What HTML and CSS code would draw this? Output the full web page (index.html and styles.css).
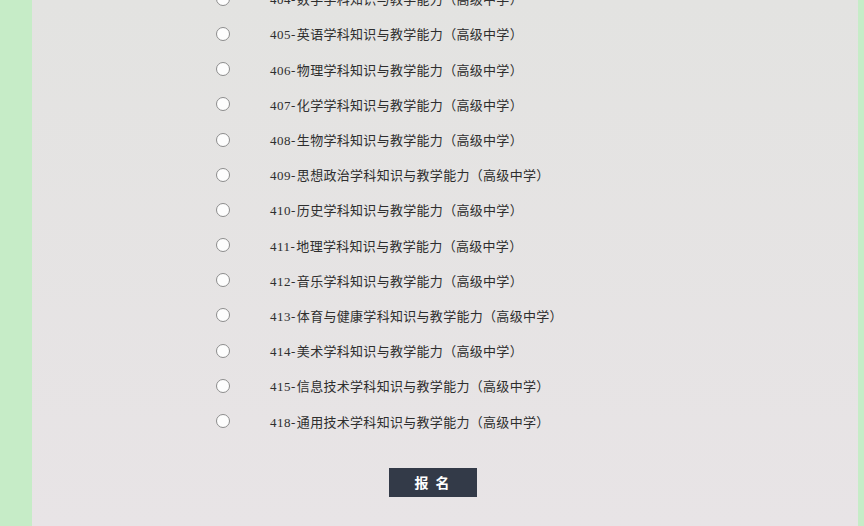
FILE: index.html
```html
<!DOCTYPE html>
<html lang="zh-CN">
<head>
    <meta charset="UTF-8">
    <meta name="viewport" content="width=device-width, initial-scale=1.0">
    <title>报名 - 科目选择</title>
    <link rel="stylesheet" href="styles.css">
</head>
<body>
    <!-- 科目列表 -->
    <div class="panel">
        <ul class="opciones">
            <li><span class="radio"></span><span class="nombre"><span class="codigo">404-</span>数学学科知识与教学能力（高级中学）</span></li>
            <li><span class="radio"></span><span class="nombre"><span class="codigo">405-</span>英语学科知识与教学能力（高级中学）</span></li>
            <li><span class="radio"></span><span class="nombre"><span class="codigo">406-</span>物理学科知识与教学能力（高级中学）</span></li>
            <li><span class="radio"></span><span class="nombre"><span class="codigo">407-</span>化学学科知识与教学能力（高级中学）</span></li>
            <li><span class="radio"></span><span class="nombre"><span class="codigo">408-</span>生物学科知识与教学能力（高级中学）</span></li>
            <li><span class="radio"></span><span class="nombre"><span class="codigo">409-</span>思想政治学科知识与教学能力（高级中学）</span></li>
            <li><span class="radio"></span><span class="nombre"><span class="codigo">410-</span>历史学科知识与教学能力（高级中学）</span></li>
            <li><span class="radio"></span><span class="nombre"><span class="codigo">411-</span>地理学科知识与教学能力（高级中学）</span></li>
            <li><span class="radio"></span><span class="nombre"><span class="codigo">412-</span>音乐学科知识与教学能力（高级中学）</span></li>
            <li><span class="radio"></span><span class="nombre"><span class="codigo">413-</span>体育与健康学科知识与教学能力（高级中学）</span></li>
            <li><span class="radio"></span><span class="nombre"><span class="codigo">414-</span>美术学科知识与教学能力（高级中学）</span></li>
            <li><span class="radio"></span><span class="nombre"><span class="codigo">415-</span>信息技术学科知识与教学能力（高级中学）</span></li>
            <li><span class="radio"></span><span class="nombre"><span class="codigo">418-</span>通用技术学科知识与教学能力（高级中学）</span></li>
        </ul>

        <!-- 报名按钮 -->
        <div class="acciones">
            <button class="btn-registro">报 名</button>
        </div>
    </div>
</body>
</html>
```

FILE: styles.css
```css
/* 全局 */
body {
    margin: 0;
    padding: 0;
    background-color: #c6ecc7;
    font-family: 'Liberation Serif', 'Noto Sans CJK SC', serif;
    color: #333;
    overflow: hidden;
}

.panel {
    display: flow-root;
    margin: 0 6px 0 32px;
    height: 526px;
    background: linear-gradient(#e3e3e1, #e8e4e6);
}

/* 科目列表 */
.opciones {
    list-style: none;
    margin: -18.8px 0 0 0;
    padding: 0 0 0 184px;
}

.opciones li {
    height: 35.2px;
    display: flex;
    align-items: center;
    gap: 40px;
}

.radio {
    width: 12px;
    height: 12px;
    border: 1px solid #8c8c8c;
    border-radius: 50%;
    background-color: #fdfdfd;
    flex-shrink: 0;
}

.nombre {
    font-size: 13px;
    color: #2e2e2e;
    white-space: nowrap;
    letter-spacing: 0.3px;
    text-spacing-trim: space-all;
}

.codigo {
    letter-spacing: 0.5px;
    margin-right: 1px;
}

/* 按钮 */
.acciones {
    padding: 29px 0 0 357px;
}

.btn-registro {
    width: 88px;
    height: 29px;
    background-color: #333a48;
    color: #fff;
    border: none;
    font-family: 'Noto Sans CJK SC', sans-serif;
    font-size: 14px;
    font-weight: bold;
    letter-spacing: 2px;
    cursor: pointer;
}
```
